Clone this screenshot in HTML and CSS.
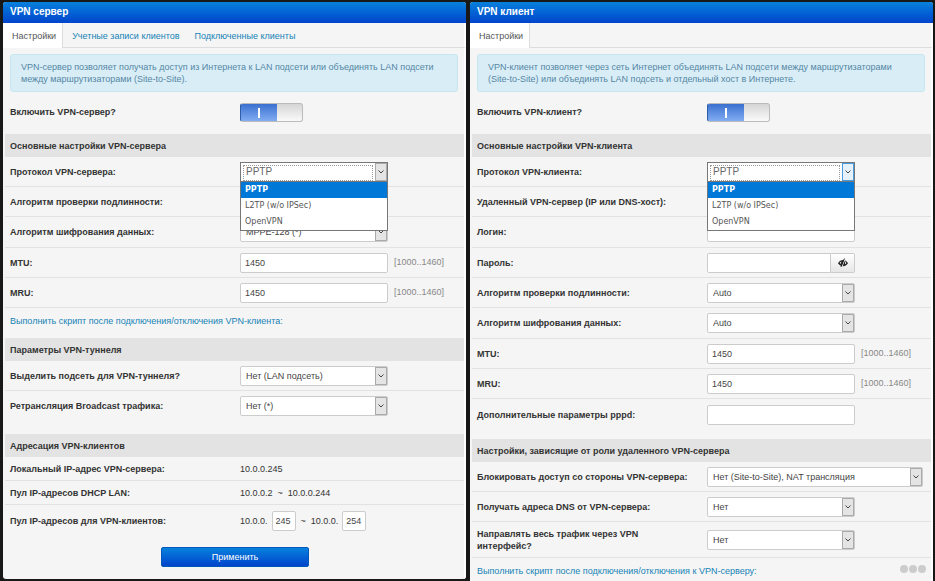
FILE: index.html
```html
<!DOCTYPE html>
<html lang="ru">
<head>
    <meta charset="UTF-8">
    <meta name="viewport" content="width=device-width, initial-scale=1.0">
    <title>VPN</title>
    <link rel="stylesheet" href="styles.css">
</head>
<body>
    <section class="panel">
        <h1 class="panel-title">VPN сервер</h1>
        <nav class="tabs">
            <a href="#" class="tab active">Настройки</a>
            <a href="#" class="tab">Учетные записи клиентов</a>
            <a href="#" class="tab">Подключенные клиенты</a>
        </nav>
        <form class="panel-body">
            <p class="info">VPN-сервер позволяет получать доступ из Интернета к LAN подсети или объединять LAN подсети между маршрутизаторами (Site-to-Site).</p>

            <div class="enable">
                <label for="srv-enable">Включить VPN-сервер?</label>
                <input type="checkbox" class="toggle" id="srv-enable" checked>
            </div>

            <h2>Основные настройки VPN-сервера</h2>
            <div class="rows">
                <div class="row">
                    <label for="srv-proto">Протокол VPN-сервера:</label>
                    <div class="dropdown">
                        <select id="srv-proto"><option>PPTP</option></select>
                        <ul class="menu">
                            <li class="selected">PPTP</li>
                            <li>L2TP (w/o IPSec)</li>
                            <li>OpenVPN</li>
                        </ul>
                    </div>
                </div>
                <div class="row">
                    <label for="srv-auth">Алгоритм проверки подлинности:</label>
                    <select id="srv-auth"><option>MS-CHAPv2 (*)</option></select>
                </div>
                <div class="row">
                    <label for="srv-crypt">Алгоритм шифрования данных:</label>
                    <select id="srv-crypt"><option>MPPE-128 (*)</option></select>
                </div>
                <div class="row">
                    <label for="srv-mtu">MTU:</label>
                    <input type="text" id="srv-mtu" value="1450">
                    <span class="hint">[1000..1460]</span>
                </div>
                <div class="row">
                    <label for="srv-mru">MRU:</label>
                    <input type="text" id="srv-mru" value="1450">
                    <span class="hint">[1000..1460]</span>
                </div>
            </div>
            <div class="script">
                <a href="#">Выполнить скрипт после подключения/отключения VPN-клиента:</a>
            </div>

            <h2>Параметры VPN-туннеля</h2>
            <div class="rows last">
                <div class="row">
                    <label for="srv-subnet">Выделить подсеть для VPN-туннеля?</label>
                    <select id="srv-subnet"><option>Нет (LAN подсеть)</option></select>
                </div>
                <div class="row">
                    <label for="srv-bcast">Ретрансляция Broadcast трафика:</label>
                    <select id="srv-bcast"><option>Нет (*)</option></select>
                </div>
            </div>

            <h2 class="spaced">Адресация VPN-клиентов</h2>
            <div class="rows last">
                <div class="row short">
                    <span class="label">Локальный IP-адрес VPN-сервера:</span>
                    <span>10.0.0.245</span>
                </div>
                <div class="row short">
                    <span class="label">Пул IP-адресов DHCP LAN:</span>
                    <span>10.0.0.2 &nbsp;~&nbsp; 10.0.0.244</span>
                </div>
                <div class="row">
                    <label for="pool-from">Пул IP-адресов для VPN-клиентов:</label>
                    <span class="pool">
                        10.0.0. <input type="text" class="octet" id="pool-from" value="245">
                        <span class="tilde">~</span>
                        10.0.0. <input type="text" class="octet" aria-label="Конец пула" value="254">
                    </span>
                </div>
            </div>

            <button type="button" class="apply">Применить</button>
        </form>
    </section>

    <section class="panel client">
        <h1 class="panel-title">VPN клиент</h1>
        <nav class="tabs">
            <a href="#" class="tab active">Настройки</a>
        </nav>
        <form class="panel-body">
            <p class="info">VPN-клиент позволяет через сеть Интернет объединять LAN подсети между маршрутизаторами (Site-to-Site) или объединять LAN подсеть и отдельный хост в Интернете.</p>

            <div class="enable">
                <label for="cli-enable">Включить VPN-клиент?</label>
                <input type="checkbox" class="toggle" id="cli-enable" checked>
            </div>

            <h2>Основные настройки VPN-клиента</h2>
            <div class="rows last">
                <div class="row">
                    <label for="cli-proto">Протокол VPN-клиента:</label>
                    <div class="dropdown hot">
                        <select id="cli-proto"><option>PPTP</option></select>
                        <ul class="menu">
                            <li class="selected">PPTP</li>
                            <li>L2TP (w/o IPSec)</li>
                            <li>OpenVPN</li>
                        </ul>
                    </div>
                </div>
                <div class="row">
                    <label for="cli-host">Удаленный VPN-сервер (IP или DNS-хост):</label>
                    <input type="text" id="cli-host">
                </div>
                <div class="row">
                    <label for="cli-login">Логин:</label>
                    <input type="text" id="cli-login">
                </div>
                <div class="row">
                    <label for="cli-pass">Пароль:</label>
                    <div class="password">
                        <input type="password" id="cli-pass">
                        <button type="button" class="eye" aria-label="Показать пароль">
                            <svg width="12" height="10" viewBox="0 0 12 10">
                                <path d="M1 5.2C2.4 3 4 2 6 2s3.6 1 5 3.2C9.6 7.2 8 8.2 6 8.2S2.400 7.2 1 5.2z" fill="#222"/>
                                <path d="M7.3 3.3c1 .6 1.2 2 .5 3l1.5-.9-.4-1.6z" fill="#eee"/>
                                <path d="M2.6 4.8l1.6-1.2-.2 2.4z" fill="#eee"/>
                                <path d="M8.2.7L4.6 9.3" stroke="#eee" stroke-width="1"/>
                                <path d="M7.4.6L3.9 9" stroke="#222" stroke-width="1"/>
                            </svg>
                        </button>
                    </div>
                </div>
                <div class="row">
                    <label for="cli-auth">Алгоритм проверки подлинности:</label>
                    <select id="cli-auth"><option>Auto</option></select>
                </div>
                <div class="row">
                    <label for="cli-crypt">Алгоритм шифрования данных:</label>
                    <select id="cli-crypt"><option>Auto</option></select>
                </div>
                <div class="row">
                    <label for="cli-mtu">MTU:</label>
                    <input type="text" id="cli-mtu" value="1450">
                    <span class="hint">[1000..1460]</span>
                </div>
                <div class="row">
                    <label for="cli-mru">MRU:</label>
                    <input type="text" id="cli-mru" value="1450">
                    <span class="hint">[1000..1460]</span>
                </div>
                <div class="row">
                    <label for="cli-pppd">Дополнительные параметры pppd:</label>
                    <input type="text" id="cli-pppd">
                </div>
            </div>

            <h2 class="spaced">Настройки, зависящие от роли удаленного VPN-сервера</h2>
            <div class="rows">
                <div class="row">
                    <label for="cli-block">Блокировать доступ со стороны VPN-сервера:</label>
                    <select id="cli-block" class="wide"><option>Нет (Site-to-Site), NAT трансляция</option></select>
                </div>
                <div class="row">
                    <label for="cli-dns">Получать адреса DNS от VPN-сервера:</label>
                    <select id="cli-dns"><option>Нет</option></select>
                </div>
                <div class="row double">
                    <label for="cli-route">Направлять весь трафик через VPN интерфейс?</label>
                    <select id="cli-route"><option>Нет</option></select>
                </div>
            </div>
            <div class="script">
                <a href="#">Выполнить скрипт после подключения/отключения к VPN-серверу:</a>
                <span class="dots"><i></i><i></i><i></i></span>
            </div>
        </form>
    </section>
</body>
</html>
```

FILE: styles.css
```css
* {
    box-sizing: border-box;
}

body {
    display: flex;
    align-items: flex-start;
    gap: 4px;
    height: 100vh;
    margin: 0;
    padding: 2px 2px 0 3px;
    overflow: hidden;
    background: #181818;
    color: #333;
    font: 9px/12px "Liberation Sans", Arial, sans-serif;
}

a {
    color: #1583b5;
    text-decoration: none;
}

.panel {
    flex: 1;
    min-width: 0;
    background: #f5f5f5;
    border-radius: 3px;
    overflow: hidden;
}

.panel-title {
    margin: 0;
    padding: 4px 7px 5px;
    background: linear-gradient(#0781dc, #0044cc);
    color: #fff;
    font-size: 10px;
    line-height: 12px;
}

/* tabs */

.tabs {
    display: flex;
    height: 25px;
    border-right: 2px solid #fff;
    border-bottom: 1px solid #ddd;
}

.tab {
    padding: 7px 6px 5px 9px;
}

.tab.active {
    height: 25px;
    background: #fff;
    border-right: 1px solid #ddd;
    color: #555;
}

/* form */

.panel-body {
    display: flex;
    flex-direction: column;
    padding: 6px 0 12px 2px;
    border-right: 2px solid #fff;
}

.info {
    margin: 0 6px 0 5px;
    padding: 6px 10px;
    background: #d9edf7;
    border: 1px solid #c6e6ef;
    border-radius: 3px;
    color: #5487a3;
}

h2 {
    margin: 0;
    padding: 6px 5px 5px;
    background: #e3e3e3;
    font-size: 9px;
    line-height: 12px;
}

.spaced {
    margin-top: 13px;
}

.client .spaced {
    margin-top: 9px;
}

.enable,
.row {
    display: flex;
    align-items: center;
    padding-left: 5px;
}

.enable {
    height: 42px;
    padding-bottom: 2px;
}

label,
.label {
    flex: 0 0 calc(50% + 3px);
    padding-right: 16px;
    font-weight: bold;
}

.row {
    height: 30px;
    border-bottom: 1px solid #e2e2e2;
}

.row:nth-child(3n) {
    height: 31px;
}

.row.short {
    height: 24px;
}

.row.double {
    height: 36px;
}

.rows.last .row:last-child {
    border-bottom: 0;
}

/* controls */

input,
select,
button {
    margin: 0;
    font: inherit;
}

select,
input[type="text"],
input[type="password"] {
    width: 148px;
    height: 20px;
    padding: 0 4px;
    background: #fff;
    border: 1px solid #ccc;
    border-radius: 2px;
    color: #444;
}

select {
    appearance: none;
    padding: 0 16px 0 5px;
    background: #fff url("data:image/svg+xml,%3Csvg xmlns='http://www.w3.org/2000/svg' width='12' height='18'%3E%3Crect x='.5' y='.5' width='11' height='17' fill='%23e4e4e4' stroke='%23aaa'/%3E%3Cpath d='M3.5 7.5L6 10l2.5-2.5' fill='none' stroke='%23444'/%3E%3C/svg%3E") no-repeat right center;
}

select.wide {
    width: 216px;
}

.hint {
    padding: 0 0 2px 6px;
    color: #888;
}

.toggle {
    appearance: none;
    width: 63px;
    height: 19px;
    background:
        linear-gradient(#fff, #fff) no-repeat 17px 4px / 2px 10px,
        linear-gradient(#3a70cf, #82adf2) no-repeat 0 0 / 36px 100%,
        linear-gradient(#d5d5d5, #fafafa);
    border: 1px solid #bbb;
    border-left-color: #2c5fa8;
    border-radius: 3px;
}

.password {
    display: flex;
    width: 148px;
}

.password input[type="password"] {
    flex: 1;
    min-width: 0;
    border-radius: 2px 0 0 2px;
}

.eye {
    display: flex;
    align-items: center;
    justify-content: center;
    width: 24px;
    padding: 0;
    background: linear-gradient(#fff, #e6e6e6);
    border: 1px solid #ccc;
    border-left: 0;
    border-radius: 0 2px 2px 0;
}

/* open list */

.dropdown {
    position: relative;
}

.dropdown select {
    display: block;
    border-color: #777;
    border-radius: 0;
    color: #666;
    font-size: 10px;
}

.dropdown.hot select {
    background-image: url("data:image/svg+xml,%3Csvg xmlns='http://www.w3.org/2000/svg' width='12' height='18'%3E%3Crect x='.5' y='.5' width='11' height='17' fill='%23e5f1fb' stroke='%234a9ade'/%3E%3Cpath d='M3.5 7.5L6 10l2.5-2.5' fill='none' stroke='%23444'/%3E%3C/svg%3E");
}

.dropdown::after {
    content: "";
    position: absolute;
    top: 3px;
    left: 3px;
    right: 15px;
    height: 14px;
    border: 1px dotted #999;
}

.menu {
    position: absolute;
    z-index: 1;
    top: 19px;
    left: 0;
    right: 0;
    margin: 0;
    padding: 0;
    background: #fff;
    border: 1px solid #777;
    list-style: none;
    color: #555;
    font: 8px/16px "DejaVu Sans", sans-serif;
}

.menu li {
    padding: 0 4px;
}

.menu .selected {
    background: #0078d7;
    color: #fff;
    font-weight: bold;
}

/* address pool */

.pool {
    display: flex;
    align-items: center;
    gap: 4px;
}

.pool input.octet {
    width: 24px;
    padding: 0 3px;
}

.tilde {
    padding: 0 1px;
}

.apply {
    width: 148px;
    height: 20px;
    margin: 11px auto 0 156px;
    padding: 0;
    background: linear-gradient(#0781dc, #0044cc);
    border: 1px solid #0058b8;
    border-radius: 2px;
    color: #fff;
}

.script {
    display: flex;
    justify-content: space-between;
    padding: 7px 5px 11px;
}

.dots {
    display: flex;
    gap: 1px;
}

.dots i {
    width: 8px;
    height: 8px;
    background: #ccc;
    border-radius: 50%;
}
```
